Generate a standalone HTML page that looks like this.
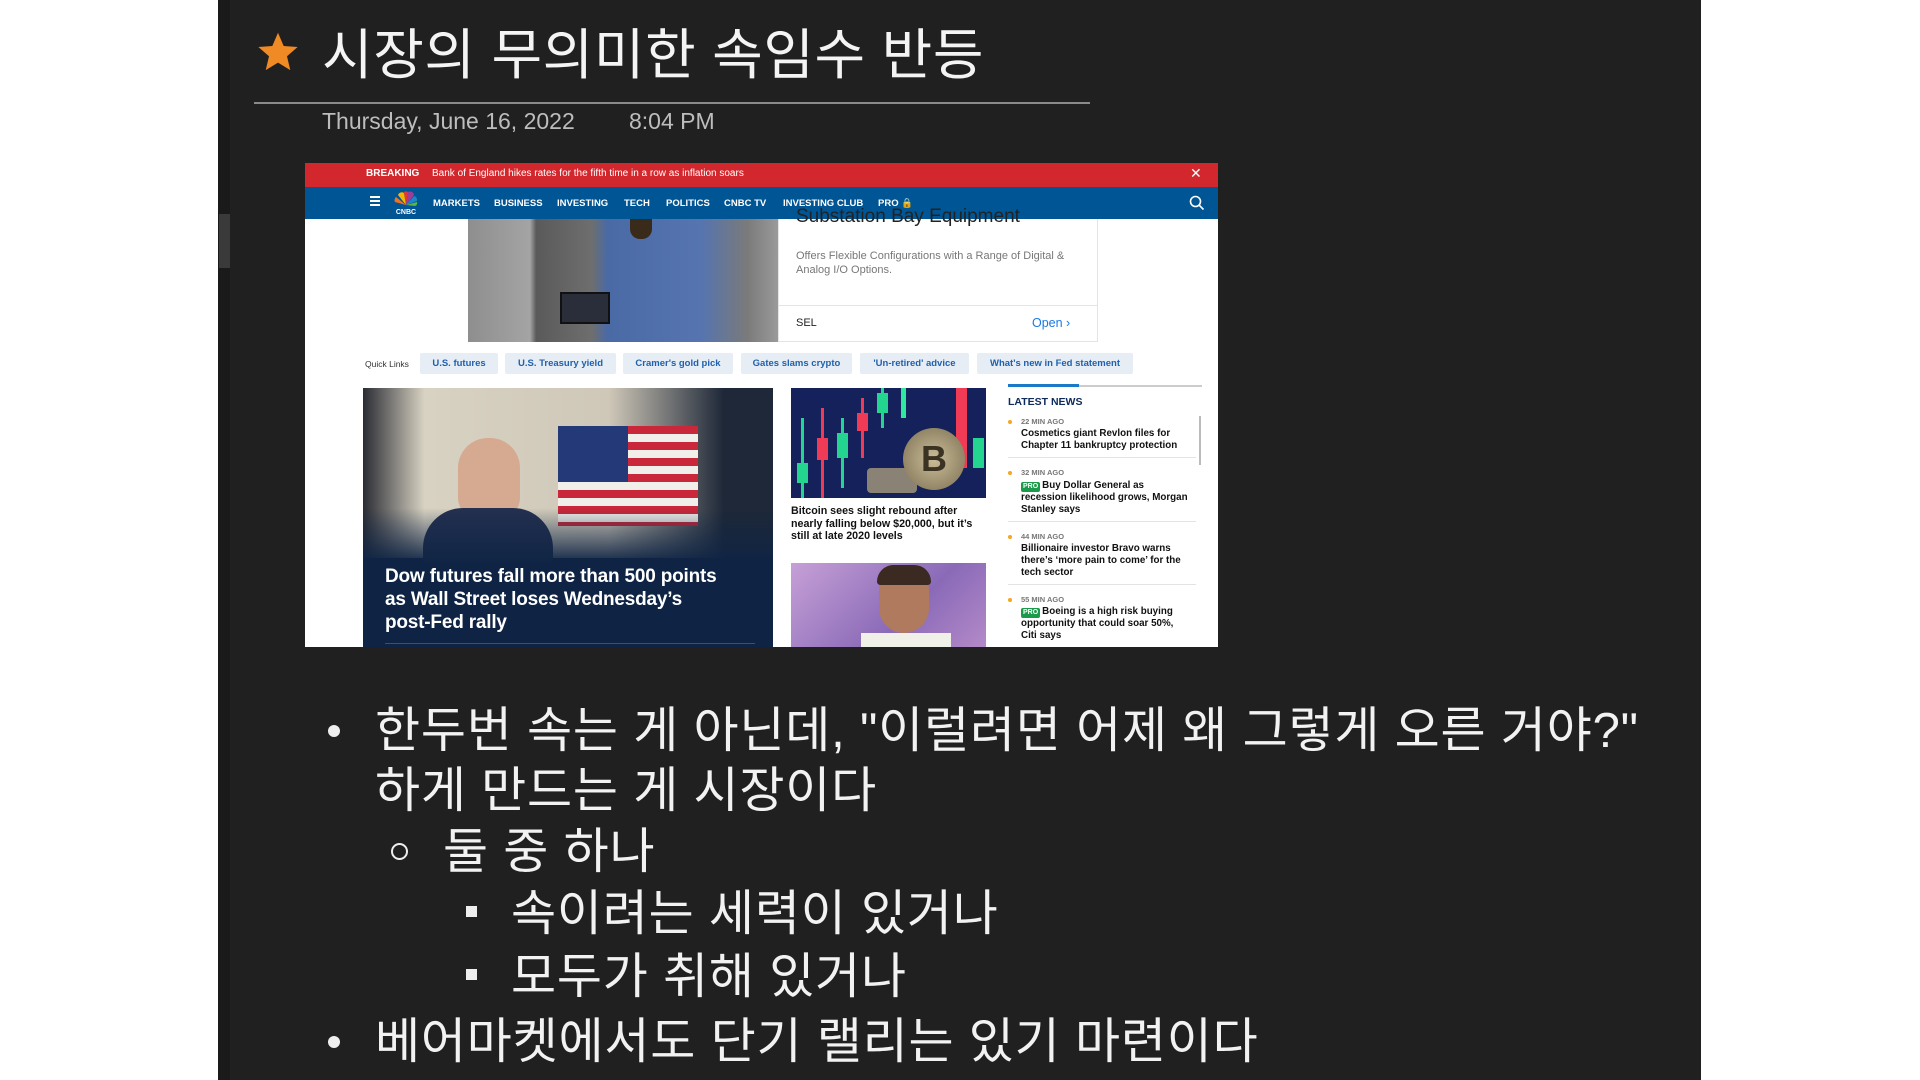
<!DOCTYPE html>
<html><head><meta charset="utf-8">
<style>
*{margin:0;padding:0;box-sizing:border-box}
body{width:1920px;height:1080px;background:#fff;position:relative;overflow:hidden;font-family:"Liberation Sans","Noto Sans CJK KR",sans-serif}
.abs{position:absolute}
#panel{left:218px;top:0;width:1483px;height:1080px;background:#212020}
.k{font-family:"Liberation Sans","Noto Sans CJK KR",sans-serif;color:#f2f2f2;white-space:nowrap}
.b{font-size:49px;line-height:60px;letter-spacing:0.8px}
.pill{position:absolute;top:353px;height:21px;background:#e6edf5;color:#2061ad;font-size:9.5px;font-weight:bold;line-height:21px;text-align:center;border-radius:2px}
.ln{font-size:9.8px;font-weight:bold;color:#111;line-height:12px;position:absolute;left:1021px;width:175px}
.ago{font-size:7.5px;font-weight:bold;color:#777;position:absolute;left:1021px}
.dot{position:absolute;left:1008px;width:4px;height:4px;border-radius:2px;background:#f6a623}
.pro{display:inline-block;background:#1a9a4a;color:#fff;font-size:7px;padding:0 2px;border-radius:2px;margin-right:2px;line-height:10px}
.sep{position:absolute;left:1008px;width:188px;height:1px;background:#e3e3e3}
</style></head><body>
<div id="panel" class="abs"></div>
<div class="abs" style="left:218px;top:0;width:12px;height:1080px;background:#1a1a1a"></div>
<div class="abs" style="left:219px;top:214px;width:11px;height:54px;background:#3a3a3a"></div>

<svg class="abs" style="left:256px;top:30px" width="44" height="44" viewBox="0 0 24 24"><path d="M12 1.5l3.1 7.2 7.6.6-5.8 5 1.8 7.6L12 17.8l-6.7 4.1 1.8-7.6-5.8-5 7.6-.6z" fill="#f08a24"/></svg>
<div class="abs k" style="left:322px;top:20px;font-size:55px;line-height:70px;letter-spacing:0.6px;color:#f4f4f4">시장의 무의미한 속임수 반등</div>
<div class="abs" style="left:254px;top:102px;width:836px;height:2px;background:#8a8a8a"></div>
<div class="abs k" style="left:322px;top:106px;font-size:23px;line-height:30px;color:#bdbdbd">Thursday, June 16, 2022</div>
<div class="abs k" style="left:629px;top:106px;font-size:23px;line-height:30px;color:#bdbdbd">8:04 PM</div>

<div class="abs" style="left:305px;top:163px;width:913px;height:484px;background:#fff"></div>
<div class="abs" style="left:305px;top:163px;width:913px;height:24px;background:#d2282d"></div>
<div class="abs" style="left:366px;top:168px;font-size:10px;font-weight:bold;color:#fff">BREAKING</div>
<div class="abs" style="left:432px;top:168px;font-size:10px;color:#fff">Bank of England hikes rates for the fifth time in a row as inflation soars</div>
<div class="abs" style="left:1190px;top:165px;font-size:14px;color:#fff">✕</div>
<div class="abs" style="left:305px;top:187px;width:913px;height:32px;background:#005594"></div>
<div class="abs" style="left:370px;top:196px;width:10px;height:2px;background:#fff;box-shadow:0 4px #fff,0 8px #fff"></div>
<svg class="abs" style="left:392px;top:191px" width="28" height="24" viewBox="0 0 28 24">
<path d="M14 14L6 4a4 4 0 0 1 6-2z" fill="#f7b500"/><path d="M14 14L12 1a3 3 0 0 1 4 0z" fill="#e8382e"/><path d="M14 14L16 1a4 4 0 0 1 6 3z" fill="#9c3d98"/><path d="M14 14L22 5a4 4 0 0 1 3 5z" fill="#1b86c8"/><path d="M14 14L4 6a4 4 0 0 0-1 5z" fill="#f37021"/><path d="M14 14L25 11a3 3 0 0 1-2 4z" fill="#5fb246"/>
<text x="14" y="23" font-size="7" font-weight="bold" fill="#fff" text-anchor="middle" font-family="Liberation Sans">CNBC</text></svg>
<div class="abs" style="top:198px;font-size:9.5px;font-weight:bold;color:#fff">
<span class="abs" style="left:433px">MARKETS</span><span class="abs" style="left:494px">BUSINESS</span><span class="abs" style="left:557px">INVESTING</span><span class="abs" style="left:624px">TECH</span><span class="abs" style="left:666px">POLITICS</span><span class="abs" style="left:724px;white-space:nowrap">CNBC&nbsp;TV</span><span class="abs" style="left:783px;white-space:nowrap">INVESTING&nbsp;CLUB</span><span class="abs" style="left:878px;white-space:nowrap">PRO 🔒</span></div>
<svg class="abs" style="left:1189px;top:195px" width="16" height="16" viewBox="0 0 16 16"><circle cx="6.5" cy="6.5" r="5" stroke="#fff" stroke-width="1.6" fill="none"/><path d="M10.2 10.2L14.5 14.5" stroke="#fff" stroke-width="1.6"/></svg>

<div class="abs" style="left:468px;top:219px;width:310px;height:123px;background:linear-gradient(90deg,#8e8e8e 0,#a4a4a4 20%,#5a5a5a 22%,#6e6e6e 40%,#4a6aa6 45%,#5574b0 75%,#7a7a7a 90%,#9a9a9a)"></div>
<div class="abs" style="left:560px;top:292px;width:50px;height:32px;background:#2a2e3a;border:2px solid #111"></div>
<div class="abs" style="left:630px;top:219px;width:22px;height:20px;border-radius:0 0 10px 10px;background:#3a2a1a"></div>
<div class="abs" style="left:778px;top:219px;width:320px;height:123px;border:1px solid #e4e4e4;border-top:none;background:#fff"></div>
<div class="abs" style="left:796px;top:206px;font-size:19px;color:#222;white-space:nowrap">Substation Bay Equipment</div>
<div class="abs" style="left:796px;top:249px;width:290px;font-size:11px;line-height:14px;color:#777">Offers Flexible Configurations with a Range of Digital &amp; Analog I/O Options.</div>
<div class="abs" style="left:778px;top:305px;width:320px;height:1px;background:#e4e4e4"></div>
<div class="abs" style="left:796px;top:317px;font-size:11px;color:#222">SEL</div>
<div class="abs" style="left:1032px;top:316px;font-size:12.5px;color:#1a7ae0">Open ›</div>

<div class="abs" style="left:365px;top:359px;font-size:8.5px;color:#333">Quick Links</div>
<div class="pill" style="left:420px;width:78px">U.S. futures</div>
<div class="pill" style="left:505px;width:111px">U.S. Treasury yield</div>
<div class="pill" style="left:623px;width:110px">Cramer's gold pick</div>
<div class="pill" style="left:741px;width:111px">Gates slams crypto</div>
<div class="pill" style="left:860px;width:109px">'Un-retired' advice</div>
<div class="pill" style="left:977px;width:156px">What's new in Fed statement</div>

<div class="abs" style="left:363px;top:388px;width:410px;height:259px;background:#0f2444;overflow:hidden">
 <div class="abs" style="left:0;top:0;width:410px;height:170px;background:linear-gradient(90deg,#2a2c34,#d8d2c2 15%,#cfc8b8 60%,#1e2838 88%)"></div>
 <div class="abs" style="left:195px;top:38px;width:140px;height:100px;background:repeating-linear-gradient(180deg,#c8283a 0 8px,#f1efe9 8px 16px)"></div>
 <div class="abs" style="left:195px;top:38px;width:70px;height:56px;background:#243a78"></div>
 <div class="abs" style="left:95px;top:50px;width:62px;height:80px;border-radius:30px 30px 20px 20px;background:#d6a991"></div>
 <div class="abs" style="left:60px;top:120px;width:130px;height:60px;border-radius:40px 40px 0 0;background:#243050"></div>
 <div class="abs" style="left:0;top:120px;width:410px;height:80px;background:linear-gradient(180deg,rgba(15,36,68,0),#0f2444 70%)"></div>
</div>
<div class="abs" style="left:385px;top:565px;width:385px;font-size:19px;line-height:23px;font-weight:bold;color:#fff;letter-spacing:-0.2px;white-space:nowrap">Dow futures fall more than 500 points<br>as Wall Street loses Wednesday’s<br>post-Fed rally</div>
<div class="abs" style="left:385px;top:643px;width:370px;height:1px;background:#3a5070"></div>

<div class="abs" style="left:791px;top:388px;width:195px;height:110px;background:#14215a;overflow:hidden">
 <div class="abs" style="left:10px;top:30px;width:3px;height:80px;background:#23d58f"></div><div class="abs" style="left:6px;top:75px;width:11px;height:20px;background:#23d58f"></div>
 <div class="abs" style="left:30px;top:20px;width:3px;height:90px;background:#ef3b56"></div><div class="abs" style="left:26px;top:50px;width:11px;height:22px;background:#ef3b56"></div>
 <div class="abs" style="left:50px;top:30px;width:3px;height:70px;background:#23d58f"></div><div class="abs" style="left:46px;top:45px;width:11px;height:25px;background:#23d58f"></div>
 <div class="abs" style="left:70px;top:10px;width:3px;height:60px;background:#ef3b56"></div><div class="abs" style="left:66px;top:25px;width:11px;height:18px;background:#ef3b56"></div>
 <div class="abs" style="left:90px;top:0;width:3px;height:40px;background:#23d58f"></div><div class="abs" style="left:86px;top:5px;width:11px;height:20px;background:#23d58f"></div>
 <div class="abs" style="left:110px;top:0;width:5px;height:30px;background:#2fe8a0"></div>
 <div class="abs" style="left:165px;top:0;width:11px;height:80px;background:#ef3b56"></div>
 <div class="abs" style="left:182px;top:50px;width:11px;height:30px;background:#23d58f"></div>
 <div class="abs" style="left:76px;top:80px;width:50px;height:25px;background:#8a8274;border-radius:4px"></div>
 <div class="abs" style="left:112px;top:40px;width:62px;height:62px;border-radius:50%;background:radial-gradient(circle,#cbbd98,#7a6e52);text-align:center;font-size:36px;font-weight:bold;color:#3a3222;line-height:62px">B</div>
</div>
<div class="abs" style="left:791px;top:505px;width:205px;font-size:10.7px;line-height:12.5px;font-weight:bold;color:#111;white-space:nowrap">Bitcoin sees slight rebound after<br>nearly falling below $20,000, but it’s<br>still at late 2020 levels</div>
<div class="abs" style="left:791px;top:563px;width:195px;height:84px;background:linear-gradient(135deg,#c6a0d6,#8a6ab8 60%,#b48ac8);overflow:hidden">
 <div class="abs" style="left:88px;top:6px;width:50px;height:64px;border-radius:22px 22px 26px 26px;background:#b07a5e"></div>
 <div class="abs" style="left:86px;top:2px;width:54px;height:20px;border-radius:25px 25px 5px 5px;background:#3a2a22"></div>
 <div class="abs" style="left:70px;top:70px;width:90px;height:20px;background:#f0efe8"></div>
</div>

<div class="abs" style="left:1008px;top:385px;width:194px;height:2px;background:#ccc"></div>
<div class="abs" style="left:1008px;top:384px;width:71px;height:3px;background:#1a7ac8"></div>
<div class="abs" style="left:1008px;top:396px;font-size:10.5px;font-weight:bold;color:#0c2a5a">LATEST NEWS</div>
<div class="abs" style="left:1199px;top:416px;width:2px;height:49px;background:#bbb"></div>
<div class="dot" style="top:420px"></div><div class="ago" style="top:417px">22 MIN AGO</div>
<div class="ln" style="top:428px">Cosmetics giant Revlon files for<br>Chapter 11 bankruptcy protection</div>
<div class="sep" style="top:457px"></div>
<div class="dot" style="top:471px"></div><div class="ago" style="top:468px">32 MIN AGO</div>
<div class="ln" style="top:480px"><span class="pro">PRO</span>Buy Dollar General as<br>recession likelihood grows, Morgan<br>Stanley says</div>
<div class="sep" style="top:521px"></div>
<div class="dot" style="top:535px"></div><div class="ago" style="top:532px">44 MIN AGO</div>
<div class="ln" style="top:543px">Billionaire investor Bravo warns<br>there’s ‘more pain to come’ for the<br>tech sector</div>
<div class="sep" style="top:584px"></div>
<div class="dot" style="top:598px"></div><div class="ago" style="top:595px">55 MIN AGO</div>
<div class="ln" style="top:606px"><span class="pro">PRO</span>Boeing is a high risk buying<br>opportunity that could soar 50%,<br>Citi says</div>

<div class="abs" style="left:328px;top:725px;width:12px;height:12px;border-radius:50%;background:#eee"></div>
<div class="abs k b" style="left:375px;top:701px">한두번 속는 게 아닌데, "이럴려면 어제 왜 그렇게 오른 거야?"</div>
<div class="abs k b" style="left:375px;top:761px">하게 만드는 게 시장이다</div>
<div class="abs" style="left:391px;top:843px;width:17px;height:17px;border-radius:50%;border:2px solid #eee"></div>
<div class="abs k b" style="left:443px;top:822px">둘 중 하나</div>
<div class="abs" style="left:466px;top:906px;width:11px;height:11px;background:#eee"></div>
<div class="abs k b" style="left:511px;top:884px">속이려는 세력이 있거나</div>
<div class="abs" style="left:466px;top:969px;width:11px;height:11px;background:#eee"></div>
<div class="abs k b" style="left:511px;top:947px">모두가 취해 있거나</div>
<div class="abs" style="left:328px;top:1036px;width:12px;height:12px;border-radius:50%;background:#eee"></div>
<div class="abs k b" style="left:375px;top:1012px">베어마켓에서도 단기 랠리는 있기 마련이다</div>
</body></html>
